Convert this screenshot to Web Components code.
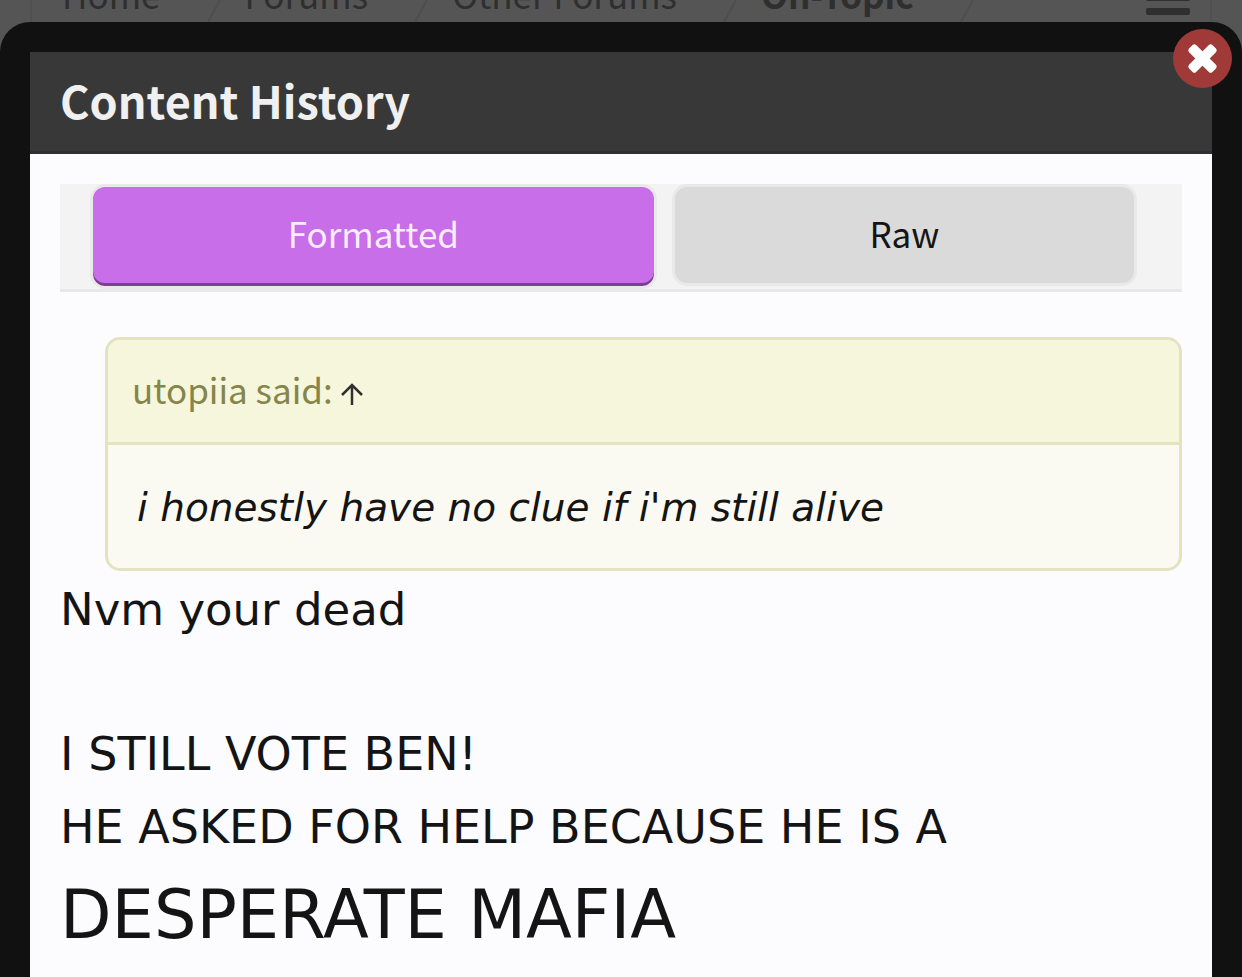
<!DOCTYPE html>
<html lang="en">
<head>
<meta charset="utf-8">
<meta name="viewport" content="width=device-width, initial-scale=1">
<title>Content History</title>
<style>
  body {
    margin: 0;
    min-height: 100vh;
    display: flex;
    flex-direction: column;
    background: #555;
    color: #141414;
    font-family: "Noto Sans CJK JP", "Noto Sans", sans-serif;
    --verdana: Verdana, "DejaVu Sans", sans-serif;
  }
  .caps {
    font-size: 46px;
  }
  .big {
    font-size: 67px;
    line-height: 102px;
  }
</style>
</head>
<body>
<crumb-bar></crumb-bar>
<history-overlay heading="Content History">
  <tab-strip></tab-strip>
  <quote-block author="utopiia">i honestly have no clue if i'm still alive</quote-block>
  <post-text>Nvm your dead<br><br><span class="caps">I STILL VOTE BEN!<br>HE ASKED FOR HELP BECAUSE HE IS A</span><br><span class="big">DESPERATE MAFIA</span></post-text>
</history-overlay>

<script>
class CrumbBar extends HTMLElement {
  constructor() {
    super()
    this.attachShadow({mode: 'open'})
    this.crumbs = ['Home', 'Forums', 'Other Forums', 'On-Topic']
    this.styles = `
      <style>
        :host {
          display: block;
          height: 22px;
          padding: 0 30px;
          overflow: hidden;
        }
        nav {
          box-sizing: border-box;
          height: 22px;
          padding: 0 20px 0 30px;
          border: solid #505050;
          border-width: 0 2px;
          display: flex;
          align-items: flex-end;
          white-space: nowrap;
        }
        a {
          padding-bottom: 3px;
          color: #2f2f2f;
          text-decoration: none;
          font-size: 35px;
          line-height: 50px;
        }
        a:last-of-type {
          font-weight: bold;
        }
        svg {
          display: block;
          flex: none;
        }
        button {
          margin-left: auto;
          padding: 0;
          border: 0;
          background: none;
        }
      </style>
    `
  }

  _createCrumbs() {
    return this.crumbs.map(crumb => `
      <a href="#">${crumb}</a>
      <svg width="84" height="22" aria-hidden="true"><path d="M59 0 47 22" stroke="#4e4e4e" stroke-width="2"/></svg>
    `).join('')
  }

  connectedCallback() {
    this.shadowRoot.innerHTML = `
      ${this.styles}
      <nav>
        ${this._createCrumbs()}
        <button aria-label="Menu">
          <svg width="44" height="44" fill="#2f2f2f"><rect y="2" width="44" height="7" rx="2"/><rect y="16" width="44" height="7" rx="2"/><rect y="30" width="44" height="7" rx="2"/></svg>
        </button>
      </nav>
    `
  }
}

class HistoryOverlay extends HTMLElement {
  constructor() {
    super()
    this.attachShadow({mode: 'open'})
    this.styles = `
      <style>
        :host {
          position: relative;
          flex: 1;
          display: flex;
          flex-direction: column;
          padding: 30px 30px 0;
          border-radius: 30px 30px 0 0;
          background: #111;
        }
        h1 {
          box-sizing: border-box;
          height: 102px;
          margin: 0;
          padding: 0 30px;
          border-bottom: 3px solid #303030;
          background: #383838;
          color: #f0f0f0;
          font-size: 45px;
          line-height: 96px;
        }
        main {
          flex: 1;
          padding: 30px 30px 0;
          background: #fcfcff;
        }
        button {
          position: absolute;
          top: 7px;
          right: 10px;
          width: 59px;
          height: 59px;
          padding: 0;
          border: 0;
          border-radius: 50%;
          background: #a03a38;
        }
        svg {
          display: block;
        }
      </style>
    `
  }

  connectedCallback() {
    this.shadowRoot.innerHTML = `
      ${this.styles}
      <h1>${this.getAttribute('heading')}</h1>
      <main><slot></slot></main>
      <button aria-label="Close">
        <svg width="59" height="59" viewBox="0 0 59 59" fill="#fff"><g transform="rotate(45 29.5 29.5)"><rect x="13" y="24.5" width="33" height="10" rx="2.5"/><rect x="24.5" y="13" width="10" height="33" rx="2.5"/></g></svg>
      </button>
    `
    this.shadowRoot.querySelector('button').addEventListener('click', () => this.remove())
  }
}

class TabStrip extends HTMLElement {
  constructor() {
    super()
    this.attachShadow({mode: 'open'})
    this.tabs = ['Formatted', 'Raw']
    this.styles = `
      <style>
        :host {
          display: flex;
          align-items: flex-start;
          gap: 15px;
          padding: 0 45px 0 30px;
          border-bottom: 3px solid #e8e8ea;
          background: #f3f3f3;
        }
        button {
          box-sizing: border-box;
          flex: 1 1 auto;
          height: 102px;
          padding: 0 30px 4px;
          border: 3px solid #e9e9e9;
          border-radius: 15px;
          background: #dadada;
          color: #141414;
          font: inherit;
          font-size: 35px;
          line-height: 92px;
        }
        button[aria-selected="true"] {
          height: 105px;
          padding-bottom: 7px;
          background: #c76ee8;
          box-shadow: inset 0 -3px #7b418f;
          color: #f9ecfd;
        }
      </style>
    `
  }

  connectedCallback() {
    this.setAttribute('role', 'tablist')
    this.shadowRoot.innerHTML = this.styles + this.tabs.map((tab, i) =>
      `<button role="tab" aria-selected="${i === 0}">${tab}</button>`).join('')
  }
}

class QuoteBlock extends HTMLElement {
  constructor() {
    super()
    this.attachShadow({mode: 'open'})
    this.styles = `
      <style>
        :host {
          display: block;
          margin: 45px 0 3px 45px;
          border: 3px solid #e3e3c1;
          border-radius: 15px;
          overflow: hidden;
          background: #fafaf2;
        }
        header {
          display: flex;
          align-items: center;
          gap: 8px;
          padding: 0 24px 4px;
          border-bottom: 3px solid #e3e3c1;
          background: #f6f6dc;
          color: #85854a;
          font-size: 35px;
          line-height: 98px;
        }
        a {
          padding-top: 10px;
        }
        svg {
          display: block;
        }
        blockquote {
          margin: 0;
          padding: 31px 29px 29px;
          font: italic 39px/63px var(--verdana);
        }
      </style>
    `
  }

  connectedCallback() {
    this.shadowRoot.innerHTML = `
      ${this.styles}
      <header>
        <span>${this.getAttribute('author')} said:</span>
        <a href="#" aria-label="Go to post"><svg width="22" height="22" fill="none" stroke="#303030" stroke-width="2.5"><path d="M11 22V2M1 12 11 2 21 12"/></svg></a>
      </header>
      <blockquote><slot></slot></blockquote>
    `
  }
}

class PostText extends HTMLElement {
  constructor() {
    super()
    this.attachShadow({mode: 'open'})
    this.shadowRoot.innerHTML = `
      <style>
        :host {
          display: block;
          font: 45px/72px var(--verdana);
        }
      </style>
      <slot></slot>
    `
  }
}

customElements.define('crumb-bar', CrumbBar)
customElements.define('history-overlay', HistoryOverlay)
customElements.define('tab-strip', TabStrip)
customElements.define('quote-block', QuoteBlock)
customElements.define('post-text', PostText)
</script>
</body>
</html>
